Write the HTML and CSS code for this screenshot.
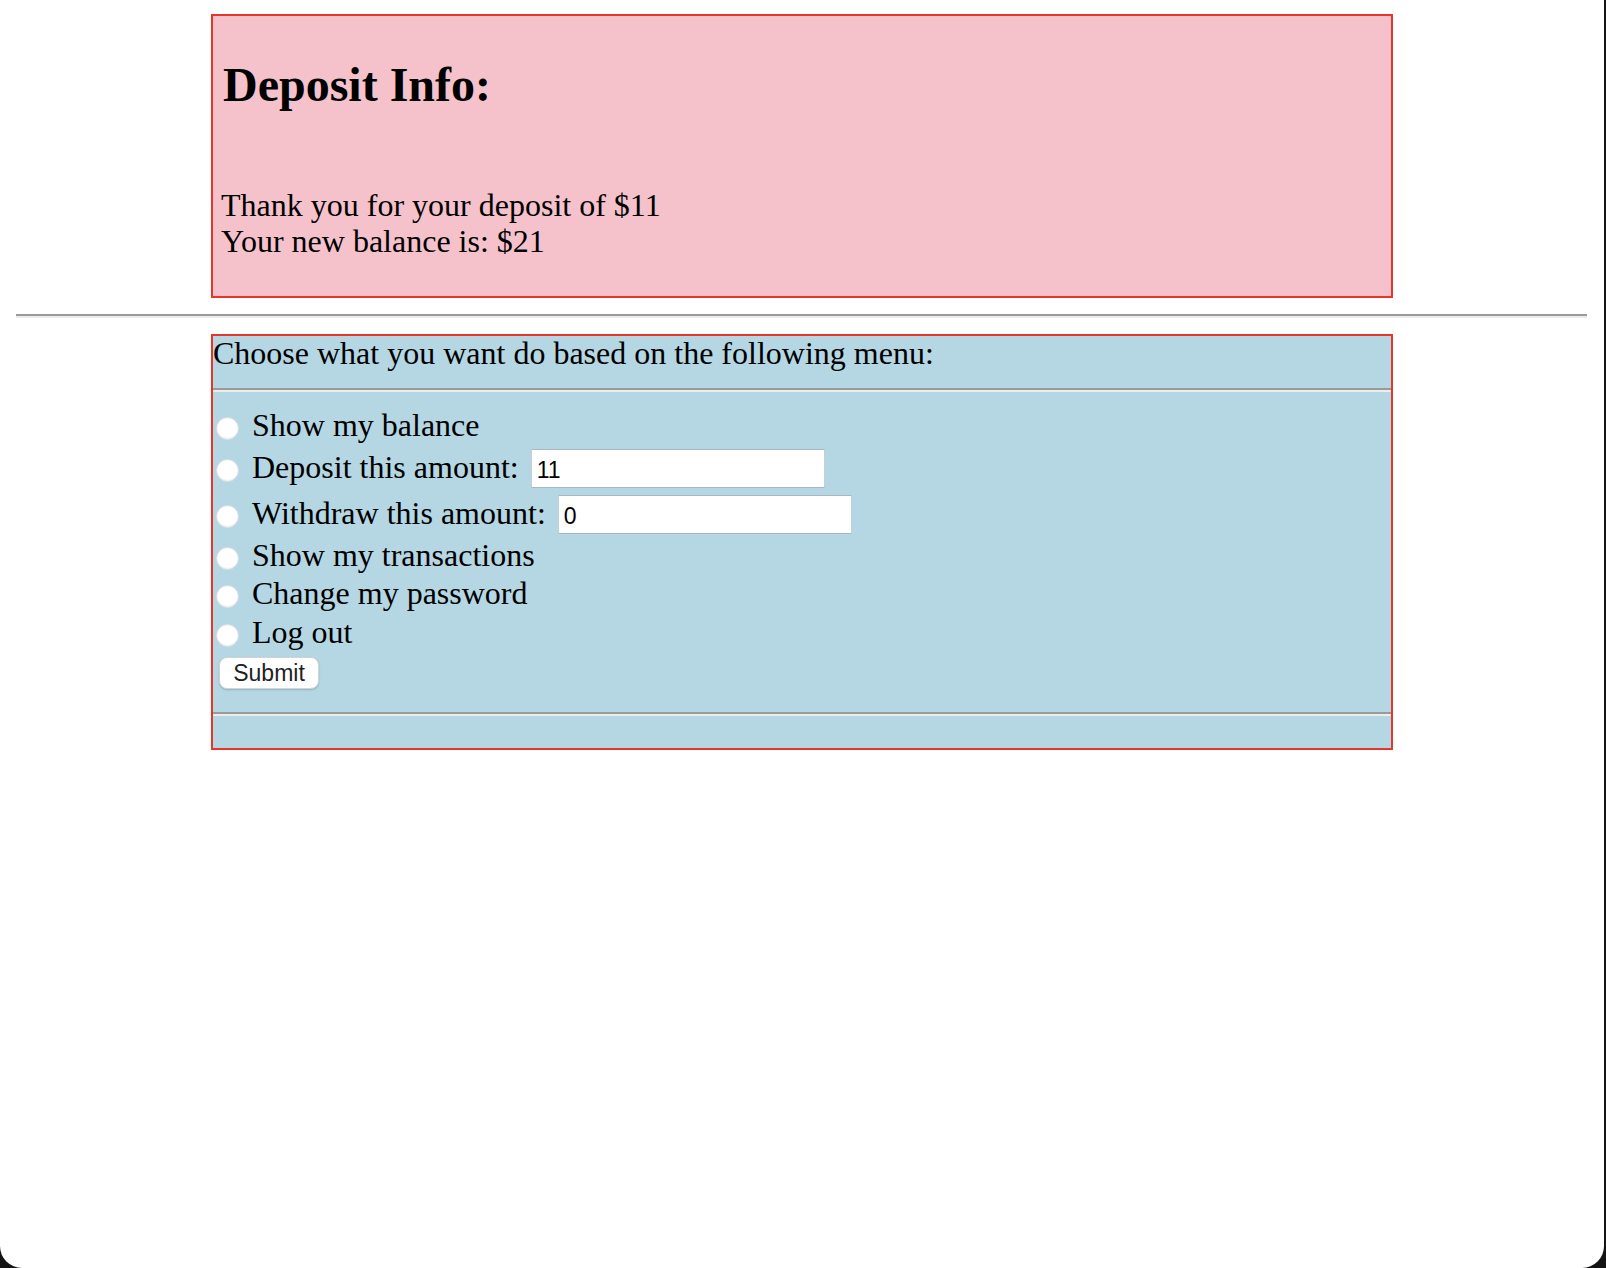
FILE: index.html
```
<!DOCTYPE html>
<html>
<head>
<meta charset="utf-8">
<title>Deposit</title>
<link rel="stylesheet" href="styles.css">
</head>
<body>
<div class="info">
  <h2 class="info-title">Deposit Info:</h2>
  <p class="info-text">Thank you for your deposit of $11<br>Your new balance is: $21</p>
</div>
<hr class="rule rule-page">
<form class="menu">
  <div class="menu-intro">Choose what you want do based on the following menu:</div>
  <hr class="rule rule-top">
  <div class="opt opt-plain"><input class="radio" type="radio" name="op"><span>Show my balance</span></div>
  <div class="opt opt-field"><input class="radio" type="radio" name="op"><span>Deposit this amount:</span><input class="amount" type="text" value="11"></div>
  <div class="opt opt-field"><input class="radio" type="radio" name="op"><span>Withdraw this amount:</span><input class="amount" type="text" value="0"></div>
  <div class="opt opt-plain"><input class="radio" type="radio" name="op"><span>Show my transactions</span></div>
  <div class="opt opt-plain opt-tall"><input class="radio" type="radio" name="op"><span>Change my password</span></div>
  <div class="opt opt-plain"><input class="radio" type="radio" name="op"><span>Log out</span></div>
  <button class="submit" type="button">Submit</button>
  <hr class="rule rule-bottom">
</form>
</body>
</html>
```
FILE: styles.css
```
html {
  background: #141414;
  margin: 0;
  padding: 0;
}
body {
  margin: 0;
  width: 1604px;
  height: 1268px;
  box-sizing: border-box;
  padding: 14px 17px 0 16px;
  background: #ffffff;
  border-radius: 0 0 22px 22px;
  font-family: "Liberation Serif", "Times New Roman", serif;
  font-size: 32px;
  color: #000;
  overflow: hidden;
}
.info {
  width: 1182px;
  box-sizing: border-box;
  margin-left: 195px;
  border: 2px solid #e8352b;
  background: #f5c2cc;
  padding: 0 8px;
}
.info-title {
  font-size: 48px;
  font-weight: bold;
  line-height: 55px;
  margin: 41px 0 0 2px;
}
.info-text {
  margin: 75px 0 0 0;
  line-height: 36px;
  padding-bottom: 37px;
}
.rule {
  height: 0;
  border: 0;
  border-top: 2px solid #9a9a9a;
  border-bottom: 2px solid #ececec;
}
.rule-page {
  margin: 16px 0 16px 0;
}
.menu {
  width: 1182px;
  box-sizing: border-box;
  margin: 0 0 0 195px;
  border: 2px solid #e8352b;
  background: #b5d7e4;
  padding-bottom: 32px;
}
.menu-intro {
  line-height: 34px;
}
.rule-top {
  margin: 18px 0 14px 0;
}
.opt {
  display: flex;
  align-items: center;
  height: 38px;
}
.opt-field {
  height: 46px;
}
.opt-tall {
  height: 39px;
}
.opt span {
  line-height: normal;
}
.radio {
  appearance: none;
  -webkit-appearance: none;
  width: 23px;
  height: 23px;
  margin: 6px 13px 0 3px;
  border-radius: 50%;
  background: #ffffff;
  border: 1px solid #d3dbe0;
  box-sizing: border-box;
  box-shadow: inset 0 -1px 1px rgba(0, 0, 0, 0.06);
  flex: none;
}
.amount {
  width: 294px;
  height: 39px;
  box-sizing: border-box;
  margin: 2px 0 0 12px;
  padding: 5px 5px 0 5px;
  border: 1px solid #c3d0d6;
  border-top-color: #a9b8c0;
  border-bottom-color: #a9b8c0;
  background: #ffffff;
  font-family: "Liberation Sans", Arial, sans-serif;
  font-size: 23px;
  color: #000;
  outline: none;
}
.submit {
  display: block;
  width: 100px;
  height: 32px;
  margin: 6px 0 0 6px;
  padding: 0;
  background: #ffffff;
  border: 1px solid #cfd4d7;
  border-radius: 8px;
  box-shadow: 0 1px 2px rgba(0, 0, 0, 0.18);
  font-family: "Liberation Sans", Arial, sans-serif;
  font-size: 23px;
  color: #222;
}
.rule-bottom {
  margin: 23px 0 0 0;
}
```
